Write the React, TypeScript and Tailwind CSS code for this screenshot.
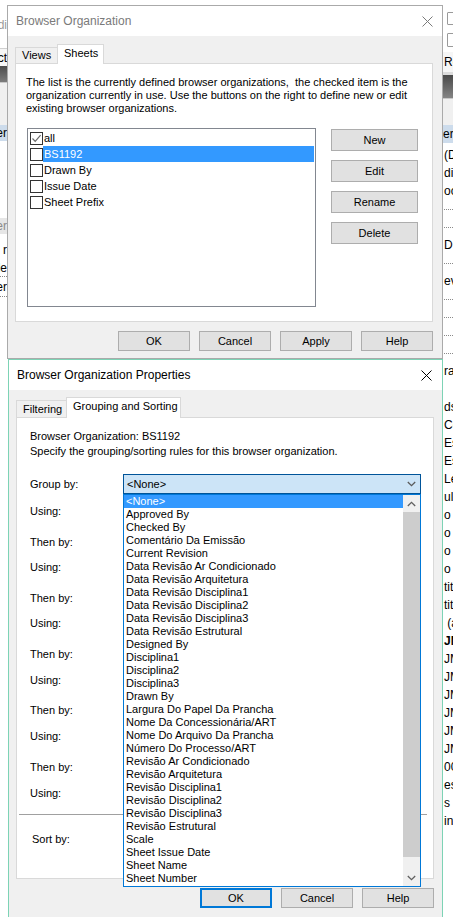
import type { ReactNode } from 'react';

const groupItems = [
  '<None>',
  'Approved By',
  'Checked By',
  'Comentário Da Emissão',
  'Current Revision',
  'Data Revisão Ar Condicionado',
  'Data Revisão Arquitetura',
  'Data Revisão Disciplina1',
  'Data Revisão Disciplina2',
  'Data Revisão Disciplina3',
  'Data Revisão Estrutural',
  'Designed By',
  'Disciplina1',
  'Disciplina2',
  'Disciplina3',
  'Drawn By',
  'Largura Do Papel Da Prancha',
  'Nome Da Concessionária/ART',
  'Nome Do Arquivo Da Prancha',
  'Número Do Processo/ART',
  'Revisão Ar Condicionado',
  'Revisão Arquitetura',
  'Revisão Disciplina1',
  'Revisão Disciplina2',
  'Revisão Disciplina3',
  'Revisão Estrutural',
  'Scale',
  'Sheet Issue Date',
  'Sheet Name',
  'Sheet Number',
];

const organizations = [
  { name: 'all', checked: true },
  { name: 'BS1192', selected: true },
  { name: 'Drawn By' },
  { name: 'Issue Date' },
  { name: 'Sheet Prefix' },
];

// project browser fragments peeking out on the right
const browserRows = [
  '(D', 'din', 'oc', '.', '.', 'D V', '.', 'ev', '.', '.', '.', '.', 'raf', '',
  'ds', 'Co', 'Es', 'Es', 'Le', 'ule', 'o', 'o', 'o', 'o', 'tit', 'tit.', ' (a',
  'JM!', 'JM', 'JM', 'JM', 'JM', 'JM', 'JM', '00', 'es', 's', 'in',
];

function CloseX({ color }: { color: string }) {
  return (
    <svg width="11" height="11" viewBox="0 0 11 11" className="shrink-0">
      <path d="M0.5 0.5 L10.5 10.5 M10.5 0.5 L0.5 10.5" stroke={color} strokeWidth="1" fill="none" />
    </svg>
  );
}

function Btn({ children, className }: { children: ReactNode; className: string }) {
  return (
    <div className={`flex items-center justify-center bg-[#e1e1e1] text-[11px] text-black ${className}`}>
      {children}
    </div>
  );
}

function Check({ checked }: { checked?: boolean }) {
  return (
    <span className="w-[13px] h-[13px] border border-[#333333] bg-white flex items-center justify-center shrink-0">
      {checked && (
        <svg width="11" height="11" viewBox="0 0 11 11">
          <path d="M1.5 5.5 L4.2 8.3 L9.6 2.2" stroke="#6b6b6b" strokeWidth="1.2" fill="none" />
        </svg>
      )}
    </span>
  );
}

function Chevron({ up, color = '#606060' }: { up?: boolean; color?: string }) {
  return (
    <svg width="9" height="6" viewBox="0 0 9 6">
      <path d={up ? 'M0.8 5 L4.5 1.3 L8.2 5' : 'M0.8 1 L4.5 4.7 L8.2 1'} stroke={color} strokeWidth="1.3" fill="none" />
    </svg>
  );
}

function LeftStrip() {
  return (
    <div className="absolute left-0 top-0 w-[7px] h-[359px] overflow-hidden flex flex-col items-end text-[12px] whitespace-nowrap">
      <div className="h-[48px] w-full bg-white flex flex-col items-end justify-end pb-[14px] text-[#9a9a9a]">di</div>
      <div className="h-[18px] w-full bg-[#f6f6f6] border-t border-[#d0d0d0] flex items-center justify-end text-black">ct</div>
      <div className="h-[16px] w-full bg-gradient-to-b from-[#4c4c4c] to-[#7c7c7c]" />
      <div className="h-[43px] w-full bg-[#f0f0f0] border-t border-[#c8c8c8]" />
      <div className="h-[16px] w-full bg-[#cddcec] flex items-center justify-end text-black">er</div>
      <div className="h-[77px] w-full bg-white" />
      <div className="h-[16px] w-full bg-[#e6e6e6] flex items-center justify-end text-[#8a8a8a]">er</div>
      <div className="h-[7px] w-full" />
      <div className="h-[18px] w-full flex items-center justify-end text-black">r</div>
      <div className="h-[18px] w-full flex items-center justify-end text-black border-b border-dotted border-[#888888]">de</div>
      <div className="h-[20px] w-full flex items-center justify-end text-black border-b border-dotted border-[#888888]">er</div>
    </div>
  );
}

function RightStrip() {
  return (
    <div className="absolute left-[443px] top-0 w-[10px] h-[917px] overflow-hidden flex flex-col text-[12px] text-black whitespace-nowrap">
      <div className="h-[52px] bg-white flex flex-col gap-[8px] pt-[12px] pl-[4px]">
        <div className="w-[8px] h-[13px] border border-[#9a9a9a] rounded-[1px]" />
        <div className="w-[8px] h-[14px] border border-[#9a9a9a] rounded-[1px]" />
      </div>
      <div className="h-[20px] bg-[#f6f6f6] flex items-center pl-[1px]">Roo</div>
      <div className="h-[3px] bg-[#dcdcdc]" />
      <div className="h-[23px] bg-gradient-to-b from-[#4a4a4a] to-[#858585]" />
      <div className="h-[27px] bg-[#f0f0f0] border-t border-[#c8c8c8]" />
      <div className="h-[18px] bg-[#cddcec] flex items-center">er -</div>
      <div className="h-[3px] bg-white" />
      {browserRows.map((r, i) => (
        <div key={i} className="h-[18px] shrink-0 flex items-center bg-white pl-[1px]">
          {r === '.' ? (
            <div className="w-full border-b border-dotted border-[#8a8a8a]" />
          ) : r === 'JM!' ? (
            <span className="font-bold">JM</span>
          ) : (
            <span className="whitespace-pre">{r}</span>
          )}
        </div>
      ))}
    </div>
  );
}

function OrganizationDialog() {
  return (
    <div className="absolute left-[7px] top-[5px] w-[436px] h-[354px] border border-[#aaaaaa] bg-[#f0f0f0] flex flex-col">
      <div className="h-[30px] bg-white flex items-center justify-between pl-[8px] pr-[9px]">
        <span className="text-[12px] text-[#7a7a7a]">Browser Organization</span>
        <CloseX color="#7a7a7a" />
      </div>
      <div className="px-[7px] flex flex-col">
        <div className="mt-[7px] h-[20px] flex items-end">
          <div className="w-[42px] h-[16px] border-t border-l border-[#d9d9d9] bg-[#f0f0f0] flex items-center pl-[6px] text-[11px]">
            Views
          </div>
          <div className="relative z-10 -mb-px w-[47px] h-[20px] border border-b-0 border-[#d9d9d9] bg-white flex items-center pl-[6px] pb-[2px] text-[11px]">
            Sheets
          </div>
        </div>
        <div className="w-[418px] h-[259px] border border-[#d9d9d9] bg-white flex flex-col pt-[12px] pl-[10px]">
          <p className="text-[11px] leading-[13px] whitespace-pre text-black">
            The list is the currently defined browser organizations,  the checked item is the
            <br />
            organization currently in use. Use the buttons on the right to define new or edit
            <br />
            existing browser organizations.
          </p>
          <div className="mt-[13px] ml-[1px] flex gap-[15px]">
            <div className="w-[289px] h-[179px] border border-[#828790] bg-white pt-[1px] pr-[1px] flex flex-col">
              {organizations.map((o) => (
                <div key={o.name} className="h-[16px] flex items-center pl-[2px] text-[11px]">
                  <Check checked={o.checked} />
                  <span
                    className={`h-full flex-1 flex items-center pl-[1px] ${o.selected ? 'bg-[#3399ff] text-white' : 'text-black'}`}
                  >
                    {o.name}
                  </span>
                </div>
              ))}
            </div>
            <div className="mt-[1px] flex flex-col gap-[9px]">
              {['New', 'Edit', 'Rename', 'Delete'].map((b) => (
                <Btn key={b} className="w-[87px] h-[22px] border border-[#adadad]">
                  {b}
                </Btn>
              ))}
            </div>
          </div>
        </div>
        <div className="w-[418px] mt-[9px] flex justify-end gap-[9px]">
          {['OK', 'Cancel', 'Apply', 'Help'].map((b) => (
            <Btn key={b} className="w-[72px] h-[20px] border border-[#adadad]">
              {b}
            </Btn>
          ))}
        </div>
      </div>
    </div>
  );
}

function GroupDropdown() {
  return (
    <div className="absolute left-0 top-[20px] z-20 w-[298px] h-[393px] border border-[#0078d7] bg-white flex">
      <div className="flex-1 flex flex-col">
        {groupItems.map((it, i) => (
          <div
            key={it}
            className={`h-[13px] shrink-0 leading-[13px] pl-[2px] text-[11px] whitespace-nowrap ${i === 0 ? 'bg-[#3399ff] text-white' : 'text-black'}`}
          >
            {it}
          </div>
        ))}
      </div>
      <div className="w-[17px] bg-[#f0f0f0] flex flex-col">
        <div className="h-[17px] flex items-center justify-center">
          <Chevron up />
        </div>
        <div className="h-[345px] bg-[#cdcdcd]" />
        <div className="h-[12px]" />
        <div className="h-[17px] flex items-center justify-center">
          <Chevron />
        </div>
      </div>
    </div>
  );
}

function Label({ children, className }: { children: ReactNode; className: string }) {
  return <div className={`h-[14px] leading-[14px] ml-[13px] text-[11px] text-black ${className}`}>{children}</div>;
}

function PropertiesDialog() {
  return (
    <div className="absolute left-[8px] top-[359px] w-[435px] h-[570px] border border-[#7dd3b5] bg-[#f0f0f0] flex flex-col">
      <div className="h-[30px] bg-white flex items-center justify-between pl-[8px] pr-[10px]">
        <span className="text-[12px] text-black">Browser Organization Properties</span>
        <CloseX color="#000000" />
      </div>
      <div className="px-[7px] flex flex-col">
        <div className="mt-[7px] h-[20px] flex items-end">
          <div className="w-[50px] h-[17px] border-t border-l border-[#d9d9d9] bg-[#f0f0f0] flex items-center pl-[6px] text-[11px]">
            Filtering
          </div>
          <div className="relative z-10 -mb-px w-[115px] h-[21px] border border-b-0 border-[#d9d9d9] bg-white flex items-center pl-[6px] pb-[3px] text-[11px]">
            Grouping and Sorting
          </div>
        </div>
        <div className="w-[418px] h-[462px] border border-[#d9d9d9] bg-white flex flex-col">
          <p className="mt-[11px] ml-[13px] text-[11px] leading-[15px] text-black whitespace-nowrap">
            Browser Organization: BS1192
            <br />
            Specify the grouping/sorting rules for this browser organization.
          </p>
          <div className="mt-[15px] h-[20px] flex items-center">
            <div className="w-[106px] pl-[13px] text-[11px] text-black">Group by:</div>
            <div className="relative w-[298px] h-[20px]">
              <div className="w-full h-full border border-[#005499] bg-[#cce4f7] flex items-center justify-between pl-[3px] pr-[4px] text-[11px] text-black">
                <span>&lt;None&gt;</span>
                <Chevron color="#5a5a5a" />
              </div>
              <GroupDropdown />
            </div>
          </div>
          <Label className="mt-[10px]">Using:</Label>
          <Label className="mt-[17px]">Then by:</Label>
          <Label className="mt-[11px]">Using:</Label>
          <Label className="mt-[17px]">Then by:</Label>
          <Label className="mt-[11px]">Using:</Label>
          <Label className="mt-[17px]">Then by:</Label>
          <Label className="mt-[12px]">Using:</Label>
          <Label className="mt-[16px]">Then by:</Label>
          <Label className="mt-[12px]">Using:</Label>
          <Label className="mt-[17px]">Then by:</Label>
          <Label className="mt-[12px]">Using:</Label>
          <div className="mt-[14px] ml-[2px] w-[408px] h-px bg-[#a0a0a0]" />
          <Label className="mt-[17px] pl-[2px]">Sort by:</Label>
        </div>
        <div className="w-[418px] mt-[9px] flex justify-end gap-[9px]">
          <Btn className="w-[72px] h-[20px] border-2 border-[#0078d7]">OK</Btn>
          <Btn className="w-[72px] h-[20px] border border-[#adadad]">Cancel</Btn>
          <Btn className="w-[72px] h-[20px] border border-[#adadad]">Help</Btn>
        </div>
      </div>
    </div>
  );
}

export default function App() {
  return (
    <div className="relative w-[453px] h-[917px] overflow-hidden bg-white font-['Liberation_Sans',Arial,sans-serif]">
      <LeftStrip />
      <RightStrip />
      <OrganizationDialog />
      <PropertiesDialog />
    </div>
  );
}
